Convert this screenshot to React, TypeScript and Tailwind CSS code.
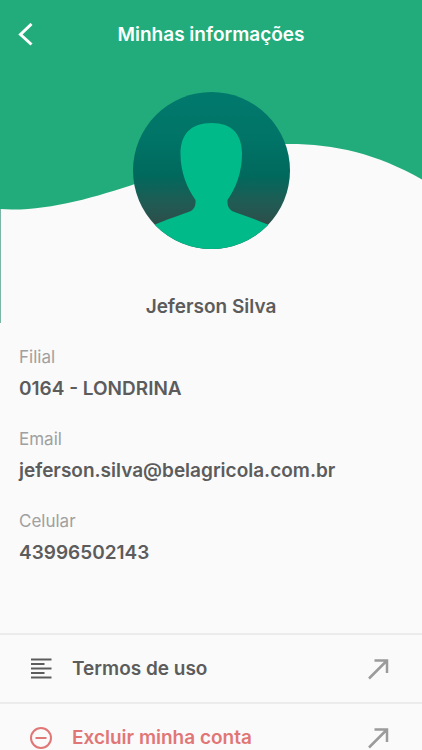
import type { ReactNode } from "react";

function Wave() {
  return (
    <svg
      className="absolute inset-x-0 top-0 h-[323px] w-full"
      viewBox="0 0 422 323"
      preserveAspectRatio="none"
      aria-hidden="true"
    >
      <path
        d="M0 0H422V179.500C376 153 332 143.500 286 144C212 144 104 210 12 209.500L0 209Z"
        fill="#22ac7b"
      />
      <path d="M0 209H1V323H0Z" fill="#7ab5a5" />
    </svg>
  );
}

function Avatar() {
  return (
    <svg className="size-[157px]" viewBox="0 0 157 157" role="img" aria-label="Jeferson Silva">
      <defs>
        <linearGradient id="avatar-shade" x1="0" y1="0" x2="0" y2="1">
          <stop offset="0" stopColor="#00796c" />
          <stop offset="0.3" stopColor="#007467" />
          <stop offset="0.53" stopColor="#00695d" />
          <stop offset="0.7" stopColor="#1f5c54" />
          <stop offset="0.86" stopColor="#2f4c49" />
        </linearGradient>
        <clipPath id="avatar-clip">
          <circle cx="78.500" cy="78.500" r="78.500" />
        </clipPath>
      </defs>
      <g clipPath="url(#avatar-clip)">
        <rect width="157" height="157" fill="url(#avatar-shade)" />
        <path
          d="M78.500 31C58 31 47.500 42 47.500 62C47.500 80 54 96 62.500 108C63 113 61.500 117 58 119C48 123 34 127 18 134.500V157H139V134.500C123 127 109 123 99 119C95.500 117 94 113 94.500 108C103 96 109 80 109 62C109 42 99 31 78.500 31Z"
          fill="#00bb89"
        />
      </g>
    </svg>
  );
}

function Field({ label, value }: { label: string; value: string }) {
  return (
    <div>
      <dt className="text-[17px] leading-6 text-[#a0a0a0]">{label}</dt>
      <dd className="mt-2 text-[19px] leading-6 font-semibold">{value}</dd>
    </div>
  );
}

function MenuRow({ icon, label, danger }: { icon: ReactNode; label: string; danger?: boolean }) {
  return (
    <li className="border-t-2 border-[#ececec]">
      <a
        href="#"
        className={`flex h-[67px] items-center pr-8 pl-7 ${danger ? "text-[#e17676]" : "text-[#5c5c5c]"}`}
      >
        {icon}
        <span className="ml-5 flex-1 text-[19px] leading-6 font-semibold">{label}</span>
        <svg className="size-6" viewBox="0 0 24 24" fill="none" stroke="#9b9b9b" strokeWidth="2.500" aria-hidden="true">
          <path d="M3 21.500L21 3.500M8.500 3.500H21V16" />
        </svg>
      </a>
    </li>
  );
}

export default function App() {
  return (
    <main className="relative h-screen overflow-hidden bg-[#fafafa] font-['Inter',sans-serif] text-[#5c5c5c]">
      <Wave />
      <div className="relative">
        <header className="grid h-[70px] grid-cols-[52px_1fr_52px] items-center text-white">
          <button type="button" aria-label="Voltar" className="flex h-full items-center pl-4">
            <svg className="size-6" viewBox="0 0 24 24" fill="none" stroke="currentColor" strokeWidth="3" aria-hidden="true">
              <path d="M15.500 1L4.500 11.500L15.500 21.500" />
            </svg>
          </button>
          <h1 className="text-center text-[19px] leading-6 font-semibold">Minhas informações</h1>
        </header>

        <section className="flex flex-col items-center pt-[22px]">
          <Avatar />
          <h2 className="mt-[46px] text-[19px] leading-6 font-semibold">Jeferson Silva</h2>
        </section>

        <dl className="mt-[26px] flex flex-col gap-[26px] px-[19px]">
          <Field label="Filial" value="0164 - LONDRINA" />
          <Field label="Email" value="jeferson.silva@belagricola.com.br" />
          <Field label="Celular" value="43996502143" />
        </dl>

        <ul className="mt-[68px]">
          <MenuRow
            label="Termos de uso"
            icon={
              <svg className="size-6" viewBox="0 0 24 24" fill="none" stroke="currentColor" strokeWidth="2" aria-hidden="true">
                <path d="M3 2.500H23.500M3 7H16.500M3 11.500H23.500M3 16H16.500M3 20.500H23.500" />
              </svg>
            }
          />
          <MenuRow
            danger
            label="Excluir minha conta"
            icon={
              <svg className="size-6" viewBox="0 0 24 24" fill="none" stroke="currentColor" strokeWidth="2" aria-hidden="true">
                <circle cx="13" cy="12" r="10" />
                <path d="M7.500 12H18.500" />
              </svg>
            }
          />
        </ul>
      </div>
    </main>
  );
}
